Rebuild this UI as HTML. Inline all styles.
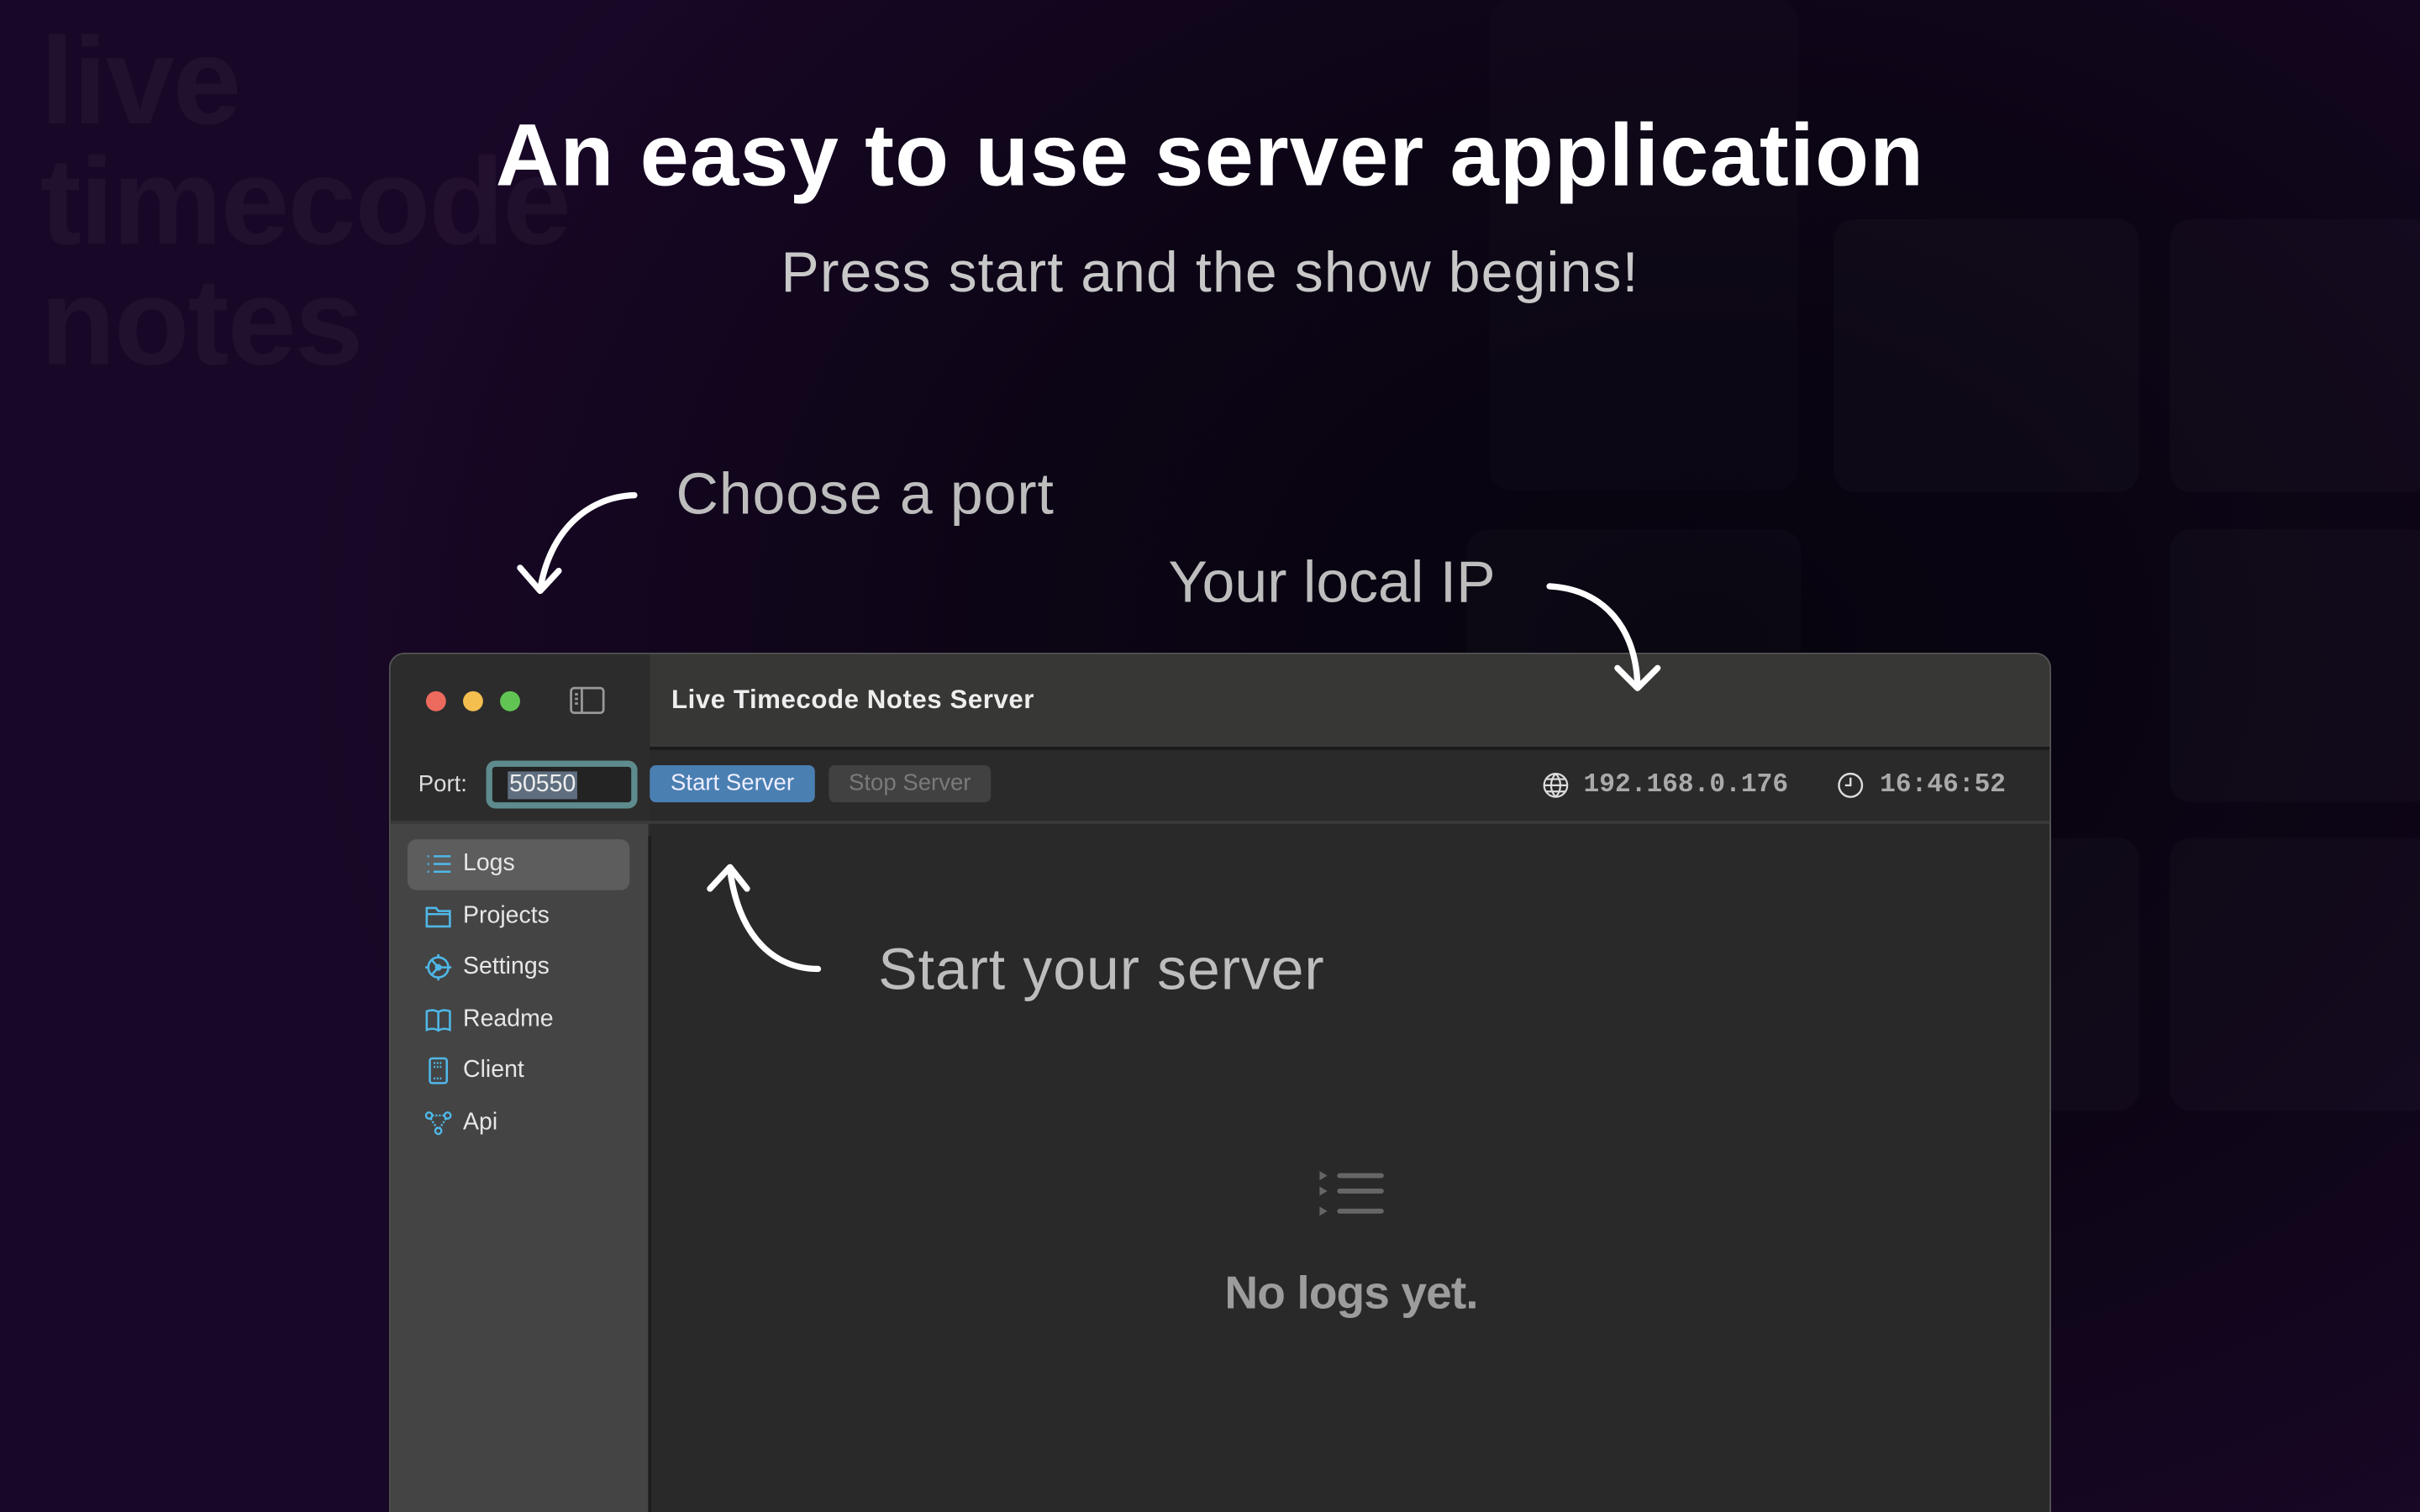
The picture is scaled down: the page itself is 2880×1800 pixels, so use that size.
<!DOCTYPE html>
<html><head><meta charset="utf-8"><style>
*{margin:0;padding:0;box-sizing:border-box}
html,body{width:2880px;height:1800px;overflow:hidden;background:#120618}
#s{width:1568px;height:980px;transform:scale(1.836735);transform-origin:0 0;position:absolute;left:0;top:0;overflow:hidden;
background:radial-gradient(ellipse 900px 700px at 1100px 420px,#06030e 0%,#0c0515 50%,#190727 100%);font-family:"Liberation Sans",sans-serif}
.a{position:absolute}
.tile{position:absolute;border-radius:14px;background:rgba(255,255,255,0.025)}
.wm{position:absolute;left:26px;top:14px;font-weight:bold;font-size:80px;line-height:78px;color:rgba(255,255,255,0.04);letter-spacing:-1px}
.side div{position:absolute;left:22px;font-size:15.5px;color:#e6e6e6;height:20px;line-height:20px}
.side svg{position:absolute;left:0;top:1px}
.side span{position:absolute;left:25px}
</style></head><body><div id="s">
<div class="tile" style="left:965px;top:0;width:200px;height:318px;background:rgba(255,255,255,0.015)"></div>
<div class="tile" style="left:1188px;top:142px;width:198px;height:177px"></div>
<div class="tile" style="left:1406px;top:142px;width:170px;height:177px"></div>
<div class="tile" style="left:950px;top:343px;width:217px;height:177px;background:rgba(255,255,255,0.02)"></div>
<div class="tile" style="left:1406px;top:343px;width:170px;height:177px"></div>
<div class="tile" style="left:1188px;top:543px;width:198px;height:177px"></div>
<div class="tile" style="left:1406px;top:543px;width:170px;height:177px"></div>
<div class="wm">live<br>timecode<br>notes</div>

<div class="a" style="left:0;width:1568px;top:68px;text-align:center;color:#fff;font-weight:bold;font-size:57px;letter-spacing:0.6px">An easy to use server application</div>
<div class="a" style="left:0;width:1568px;top:156px;text-align:center;color:#c8c8c8;font-size:37px;letter-spacing:0.6px">Press start and the show begins!</div>
<div class="a" style="left:438px;top:300px;color:#bdbdbd;font-size:38px;letter-spacing:0.5px">Choose a port</div>
<div class="a" style="left:757px;top:357px;color:#bdbdbd;font-size:38px;letter-spacing:0px">Your local IP</div>

<!-- window -->
<div class="a" style="left:252px;top:423px;width:1077px;height:557px;border-radius:10px 10px 0 0;background:#292929;border:1px solid #555;border-bottom:none;overflow:hidden">
  <div class="a" style="left:0;top:0;width:168px;height:120px;background:#2c2c2c"></div>
  <div class="a" style="left:168px;top:0;width:910px;height:62px;background:#373735;border-bottom:2px solid #1a1a1a"></div>
  <div class="a" style="left:168px;top:64px;width:910px;height:45px;background:#2a2a2a"></div>
  <div class="a" style="left:0;top:108px;width:1077px;height:2px;background:#3a3a3a"></div>
  <div class="a" style="left:0;top:110px;width:167px;height:500px;background:#444"></div>
  <div class="a" style="left:167px;top:118px;width:2px;height:500px;background:#1c1c1c"></div>
  <div class="a" style="left:23px;top:24px;width:13px;height:13px;border-radius:50%;background:#ec6a5e"></div>
  <div class="a" style="left:47px;top:24px;width:13px;height:13px;border-radius:50%;background:#f4bf4f"></div>
  <div class="a" style="left:71px;top:24px;width:13px;height:13px;border-radius:50%;background:#61c554"></div>
  <svg class="a" style="left:116px;top:21px" width="24" height="19" fill="none" stroke="#999" stroke-width="1.5"><rect x="1" y="1" width="21" height="16" rx="2"/><path d="M8 1V17M3.5 5h2M3.5 8h2M3.5 11h2"/></svg>
  <div class="a" style="left:182px;top:20px;color:#eee;font-size:17px;font-weight:bold;letter-spacing:0.3px">Live Timecode Notes Server</div>
  <div class="a" style="left:18px;top:76px;color:#ddd;font-size:15px">Port:</div>
  <div class="a" style="left:62px;top:69px;width:98px;height:31px;border:4px solid #5e8b8d;border-radius:6px;background:#232323"></div>
  <div class="a" style="left:76px;top:76px;height:18px;padding:0 1px;background:#5e6e7e;color:#eee;font-size:15.5px;line-height:18px">50550</div>
  <div class="a" style="left:168px;top:72px;width:107px;height:24px;border-radius:4px;background:#4a7fb2;color:#eef;font-size:15px;text-align:center;line-height:24px">Start Server</div>
  <div class="a" style="left:284px;top:72px;width:105px;height:24px;border-radius:4px;background:#414141;color:#7a7a7a;font-size:15px;text-align:center;line-height:24px">Stop Server</div>
  <svg class="a" style="left:746px;top:76px" width="18" height="18" fill="none" stroke="#ddd" stroke-width="1.2"><circle cx="9" cy="9" r="7.5"/><path d="M1.5 9h15M9 1.5c-4 4-4 11 0 15M9 1.5c4 4 4 11 0 15M3 5h12M3 13h12"/></svg>
  <div class="a" style="left:773px;top:76px;color:#aaa;font-family:'Liberation Mono',monospace;font-size:17px;font-weight:bold">192.168.0.176</div>
  <svg class="a" style="left:937px;top:76px" width="18" height="18" fill="none" stroke="#ddd" stroke-width="1.3"><circle cx="9" cy="9" r="7.5"/><path d="M9 4v5H5.5"/></svg>
  <div class="a" style="left:965px;top:76px;color:#aaa;font-family:'Liberation Mono',monospace;font-size:17px;font-weight:bold">16:46:52</div>

  <div class="a" style="left:11px;top:120px;width:144px;height:33px;border-radius:6px;background:#5d5d5d"></div>
  <div class="side">
   <div style="top:126px"><svg width="18" height="18" fill="none" stroke="#4fb8e8" stroke-width="1.4"><path d="M6 4h11M6 9h11M6 14h11M2 4h1M2 9h1M2 14h1"/></svg><span>Logs</span></div>
   <div style="top:160px"><svg width="18" height="18" fill="none" stroke="#4fb8e8" stroke-width="1.4"><path d="M1.5 3.5h6l1.5 2h7.5v10h-15zM1.5 7.5h15"/></svg><span>Projects</span></div>
   <div style="top:193px"><svg width="18" height="18" fill="none" stroke="#4fb8e8" stroke-width="1.4"><circle cx="9" cy="9" r="6.5"/><circle cx="9" cy="9" r="1.5"/><path d="M9 9L5 4.5M9 9L5 13.5M9 9h6M9 .5v2M9 15.5v2M.5 9h2M15.5 9h2"/></svg><span>Settings</span></div>
   <div style="top:227px"><svg width="18" height="18" fill="none" stroke="#4fb8e8" stroke-width="1.4"><path d="M9 4C7 2.5 4 2.5 1.5 3.5v12c2.5-1 5.5-1 7.5.5 2-1.5 5-1.5 7.5-.5v-12C14 2.5 11 2.5 9 4zM9 4v12"/></svg><span>Readme</span></div>
   <div style="top:260px"><svg width="18" height="18" fill="none" stroke="#4fb8e8" stroke-width="1.4"><rect x="3.5" y="1" width="11" height="16" rx="1.5"/><path d="M6 4h6M6 6.5h6M6 14h6" stroke-dasharray="1 1"/></svg><span>Client</span></div>
   <div style="top:294px"><svg width="18" height="18" fill="none" stroke="#4fb8e8" stroke-width="1.3"><circle cx="3" cy="4" r="2"/><circle cx="15" cy="4" r="2"/><circle cx="9" cy="14" r="2"/><path d="M5 4h8M4 6l4 6M14 6l-4 6" stroke-dasharray="1.2 1"/></svg><span>Api</span></div>
  </div>

  <svg class="a" style="left:0;top:0" width="1077" height="557" fill="none" stroke="#fff" stroke-width="4" stroke-linecap="round" stroke-linejoin="round">
   <path d="M277 204 C250 204 226 185 220 140"/><path d="M207 152 L220 138 L231 152"/>
  </svg>
  <div class="a" style="left:316px;top:184px;color:#bdbdbd;font-size:38px;letter-spacing:0.5px">Start your server</div>

  <svg class="a" style="left:600px;top:333px" width="46" height="36" fill="#666" stroke="#666"><path d="M2 2l5 3-5 3zM2 12l5 3-5 3zM2 25l5 3-5 3z" stroke="none"/><path d="M15 5h27M15 15h27M15 28h27" stroke-width="3.2" stroke-linecap="round"/></svg>
  <div class="a" style="left:450px;top:398px;width:345px;text-align:center;color:#9c9c9c;font-size:30px;font-weight:bold;letter-spacing:-0.5px">No logs yet.</div>
</div>

<svg class="a" style="left:0;top:0" width="1568" height="980" fill="none" stroke="#fff" stroke-width="4" stroke-linecap="round" stroke-linejoin="round">
<path d="M411 321 C380 322 356 345 350 382"/><path d="M337 368 L350 383 L362 370"/>
<path d="M1004 380 C1040 382 1060 408 1061 444"/><path d="M1048 433 L1061 446 L1074 433"/>
</svg>
</div></body></html>
